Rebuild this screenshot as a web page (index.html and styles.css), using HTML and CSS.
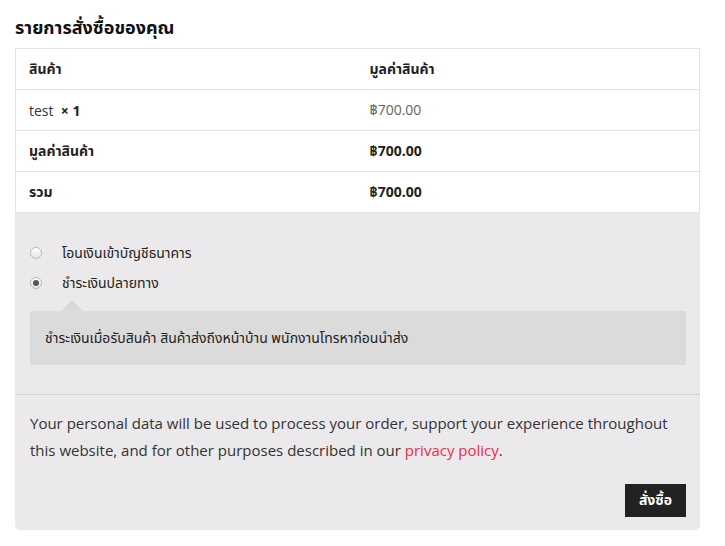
FILE: index.html
```html
<!DOCTYPE html>
<html lang="th">
<head>
<meta charset="utf-8">
<link rel="stylesheet" href="styles.css">
</head>
<body>
<div class="page">
  <h3 class="title">รายการสั่งซื้อของคุณ</h3>
  <table class="order">
    <thead>
      <tr><th class="c1">สินค้า</th><th>มูลค่าสินค้า</th></tr>
    </thead>
    <tbody>
      <tr><td class="c1">test&nbsp; <strong>× 1</strong></td><td class="price">฿700.00</td></tr>
    </tbody>
    <tfoot>
      <tr><th class="c1">มูลค่าสินค้า</th><td class="strong">฿700.00</td></tr>
      <tr><th class="c1">รวม</th><td class="strong">฿700.00</td></tr>
    </tfoot>
  </table>
  <div class="payment">
    <ul class="methods">
      <li class="method"><span class="radio"></span><span>โอนเงินเข้าบัญชีธนาคาร</span></li>
      <li class="method"><span class="radio checked"></span><span>ชำระเงินปลายทาง</span></li>
    </ul>
    <div class="desc">ชำระเงินเมื่อรับสินค้า สินค้าส่งถึงหน้าบ้าน พนักงานโทรหาก่อนนำส่ง</div>
    <div class="place">
      <p class="privacy">Your personal data will be used to process your order, support your experience throughout this website, and for other purposes described in our <a href="#">privacy policy</a>.</p>
      <div class="actions"><button class="btn">สั่งซื้อ</button></div>
    </div>
  </div>
</div>
</body>
</html>
```

FILE: styles.css
```css
* { box-sizing: border-box; }
body {
  margin: 0;
  background: #fff;
  font-family: "Open Sans", "Noto Sans Thai", "Noto Sans", sans-serif;
  color: #333;
}
.page {
  padding: 13px 25px 0 15px;
}
.title {
  margin: 0 0 7px 0;
  font-size: 18px;
  font-weight: 700;
  color: #111;
  line-height: 28px;
}
.order {
  width: 100%;
  border-collapse: collapse;
  border: 1px solid #e3e3e3;
  font-size: 14px;
}
.order th, .order td {
  text-align: left;
  height: 41px;
  padding: 0 13px;
  border-bottom: 1px solid #e3e3e3;
  vertical-align: middle;
}
.order th { font-weight: 700; color: #222; }
.order .c1 { width: 341px; }
.order td.price { color: #666; }
.order td.strong { font-weight: 700; color: #222; }
.order strong { color: #222; }
.payment {
  background: #ebe9eb;
  border-radius: 0 0 5px 5px;
  padding-top: 25px;
}
.methods {
  list-style: none;
  margin: 0;
  padding: 0 15px 0 15px;
}
.method {
  display: flex;
  align-items: center;
  height: 30px;
  font-size: 14px;
  color: #222;
}
.radio {
  width: 12px;
  height: 12px;
  border-radius: 50%;
  border: 1px solid #b9b9b9;
  background: linear-gradient(#fff, #e6e6e6);
  margin-right: 20px;
  position: relative;
}
.radio.checked::after {
  content: "";
  position: absolute;
  left: 2px; top: 2px;
  width: 6px; height: 6px;
  border-radius: 50%;
  background: #555;
}
.desc {
  position: relative;
  margin: 13px 14px 0 15px;
  background: #dcdbdc;
  border-radius: 2px;
  padding: 0 15px;
  height: 54px;
  display: flex;
  align-items: center;
  font-size: 14px;
  color: #222;
}
.desc::before {
  content: "";
  position: absolute;
  top: -11px;
  left: 31px;
  border-left: 11px solid transparent;
  border-right: 11px solid transparent;
  border-bottom: 11px solid #dcdbdc;
}
.place {
  margin-top: 29px;
  border-top: 1px solid #d3d1d3;
  padding: 15px 14px 13px 15px;
}
.privacy {
  margin: 0;
  font-size: 15px;
  line-height: 27px;
  color: #333;
}
.privacy a { color: #ea2e49; text-decoration: none; }
.actions {
  display: flex;
  justify-content: flex-end;
  margin-top: 20px;
}
.btn {
  background: #222;
  color: #fff;
  border: 0;
  border-radius: 0;
  width: 61px;
  height: 33px;
  font-family: inherit;
  font-size: 14px;
  font-weight: 700;
  padding: 0;
}
```
